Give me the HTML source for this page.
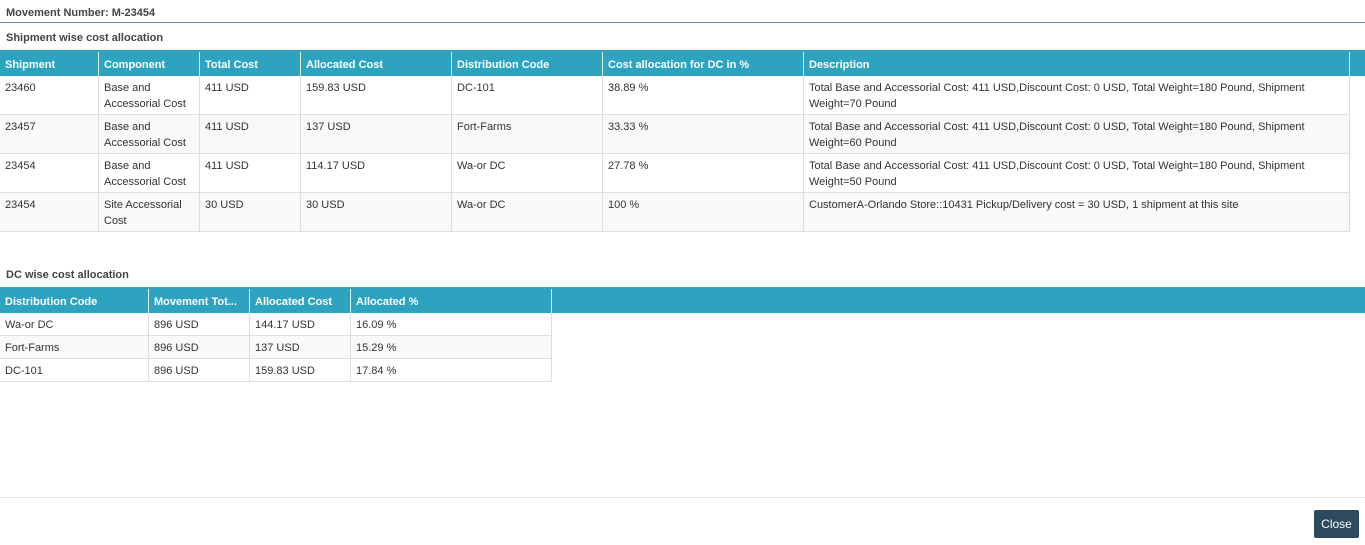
<!DOCTYPE html>
<html><head><style>
*{margin:0;padding:0;box-sizing:border-box}
body{width:1365px;height:545px;background:#fff;font-family:"Liberation Sans",sans-serif;font-size:11px;color:#333;position:relative;overflow:hidden}
.t{position:absolute;font-weight:bold;color:#444;font-size:11px}
.hr{position:absolute;left:0;top:22px;width:1365px;height:1px;background:#6a8a98}
.hdr{position:absolute;left:0;height:26px;background:#2ea3bf;width:1365px}
.c{position:absolute;line-height:16px;overflow:hidden}
.h{color:#fff;font-weight:bold;border-right:1px solid #d8eef4;padding:5px 5px 0}
.r{border-right:1px solid #ddd;border-bottom:1px solid #ddd;padding:4px 5px 0}
.btn{position:absolute;left:1314px;top:510px;width:45px;height:28px;background:#2d4a5f;color:#fff;border-radius:2px;font-size:12px;text-align:center;line-height:29px}
</style></head><body>
<div class="t" style="left:6px;top:7px">Movement Number: M-23454</div>
<div class="hr"></div>
<div class="t" style="left:6px;top:32px">Shipment wise cost allocation</div>
<div class="hdr" style="top:50px"></div>
<div id="a"></div>
<div class="t" style="left:6px;top:269px">DC wise cost allocation</div>
<div class="hdr" style="top:287px"></div>
<div id="b"></div>
<div style="position:absolute;left:0;top:497px;width:1365px;height:1px;background:#e5e5e5"></div>
<div class="btn">Close</div>
<script>
function build(id,top,hh,rh,cols,heads,rows){
 var s='';
 for(var i=0;i<heads.length;i++){
  s+='<div class="c h" style="left:'+cols[i]+'px;width:'+(cols[i+1]-cols[i])+'px;top:'+(top+2)+'px;height:'+(hh-2)+'px">'+heads[i]+'</div>';
 }
 rows.forEach(function(r,j){
  var y=top+hh+j*rh;
  for(var i=0;i<r.length;i++){
   s+='<div class="c r" style="left:'+cols[i]+'px;width:'+(cols[i+1]-cols[i])+'px;top:'+y+'px;height:'+rh+'px;background:'+(j%2?'#f9f9f9':'#fff')+'">'+r[i]+'</div>';
  }
 });
 document.getElementById(id).innerHTML=s;
}
var d1='Total Base and Accessorial Cost: 411 USD,Discount Cost: 0 USD, Total Weight=180 Pound, Shipment Weight=';
build('a',50,26,39,[0,99,200,301,452,603,804,1350],
['Shipment','Component','Total Cost','Allocated Cost','Distribution Code','Cost allocation for DC in %','Description'],
[['23460','Base and Accessorial Cost','411 USD','159.83 USD','DC-101','38.89 %',d1+'70 Pound'],
['23457','Base and Accessorial Cost','411 USD','137 USD','Fort-Farms','33.33 %',d1+'60 Pound'],
['23454','Base and Accessorial Cost','411 USD','114.17 USD','Wa-or DC','27.78 %',d1+'50 Pound'],
['23454','Site Accessorial Cost','30 USD','30 USD','Wa-or DC','100 %','CustomerA-Orlando Store::10431 Pickup/Delivery cost = 30 USD, 1 shipment at this site']]);
build('b',287,26,23,[0,149,250,351,552],
['Distribution Code','Movement Tot...','Allocated Cost','Allocated %'],
[['Wa-or DC','896 USD','144.17 USD','16.09 %'],['Fort-Farms','896 USD','137 USD','15.29 %'],['DC-101','896 USD','159.83 USD','17.84 %']]);
</script>
</body></html>
